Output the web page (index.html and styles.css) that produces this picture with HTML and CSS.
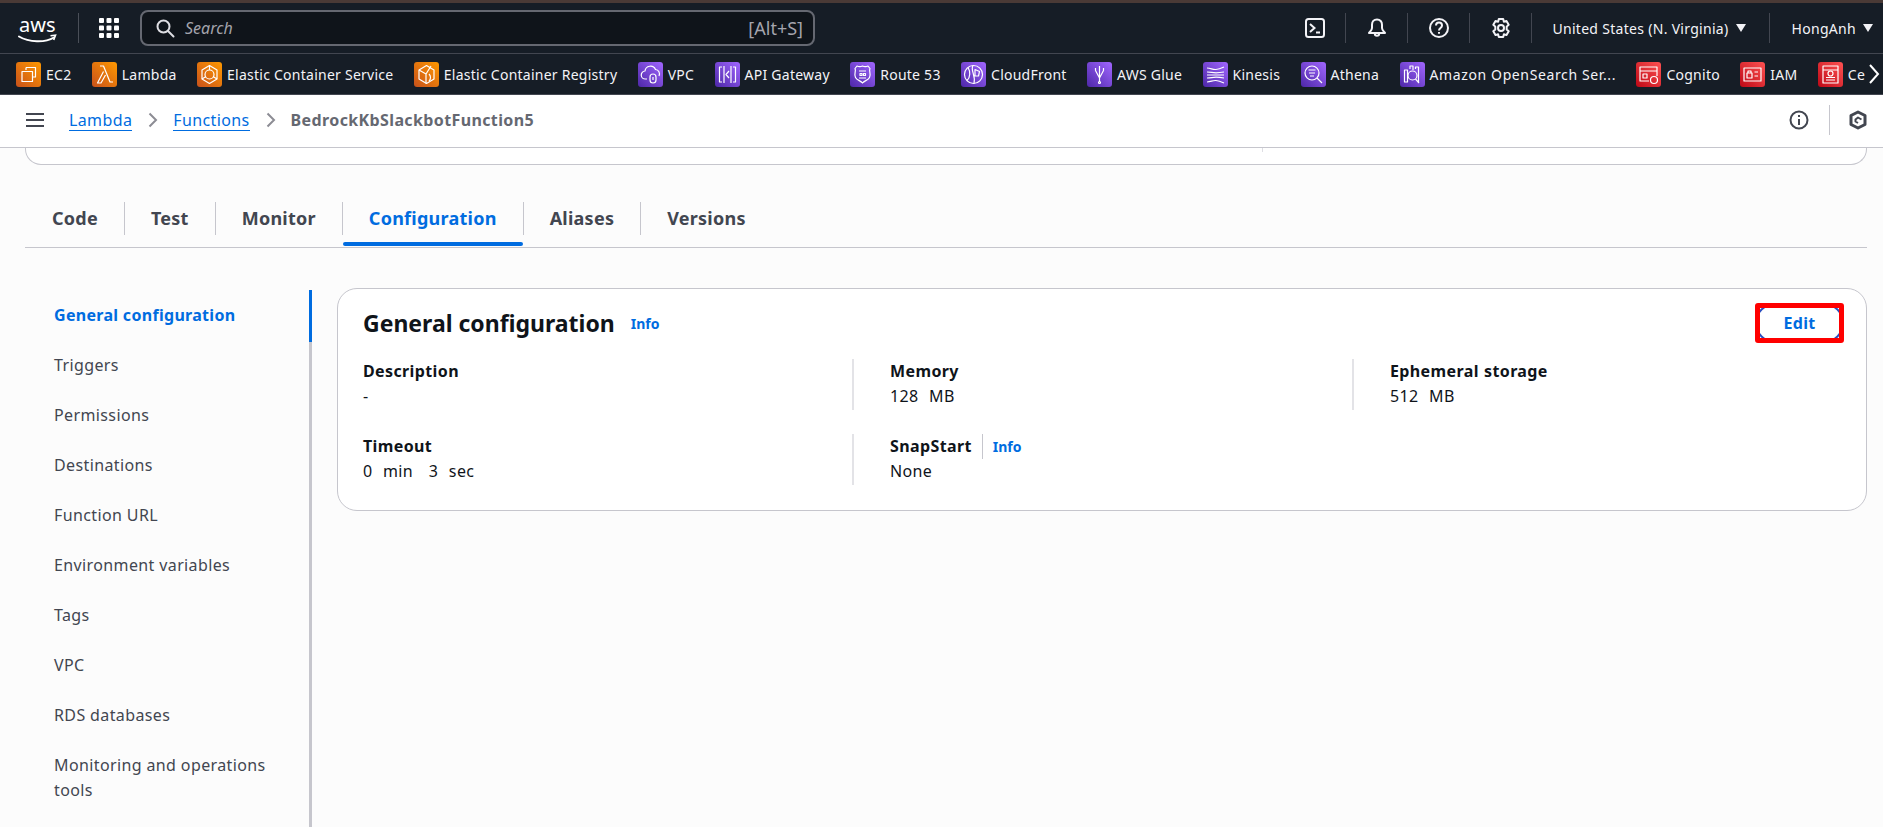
FILE: index.html
```html
<!DOCTYPE html>
<html lang="en">
<head>
    <meta charset="UTF-8">
    <title>Lambda - General configuration</title>
    <link rel="stylesheet" href="styles.css">
</head>
<body>
<div class="strip"></div>

<header class="topnav">
    <svg class="aws-logo" viewBox="0 -6 40 32" width="40" height="32">
        <text x="1" y="14" class="aws-text">aws</text>
        <path d="M1 18.500c10 6 26 6.500 35 1" fill="none" stroke="#fff" stroke-width="2" stroke-linecap="round"/>
        <path d="M32.500 17.800l5-.6-1.800 4.800" fill="none" stroke="#fff" stroke-width="1.600"/>
    </svg>
    <span class="nav-sep-logo"></span>
    <svg class="apps" viewBox="0 0 20 20" width="20" height="20" fill="#fff">
        <rect x="0" y="0" width="5" height="5" rx="1"/><rect x="7.500" y="0" width="5" height="5" rx="1"/><rect x="15" y="0" width="5" height="5" rx="1"/>
        <rect x="0" y="7.500" width="5" height="5" rx="1"/><rect x="7.500" y="7.500" width="5" height="5" rx="1"/><rect x="15" y="7.500" width="5" height="5" rx="1"/>
        <rect x="0" y="15" width="5" height="5" rx="1"/><rect x="7.500" y="15" width="5" height="5" rx="1"/><rect x="15" y="15" width="5" height="5" rx="1"/>
    </svg>
    <div class="search">
        <svg viewBox="0 0 20 20" width="20" height="20" fill="none" stroke="#dedee3" stroke-width="2"><circle cx="8.500" cy="8.500" r="6"/><path d="M13 13l5.500 5.500" stroke-linecap="round"/></svg>
        <span class="search-text">Search</span>
        <span class="search-key">[Alt+S]</span>
    </div>
    <div class="nav-right">
        <span class="nav-icon">
            <svg viewBox="0 0 20 20" width="20" height="20" fill="none" stroke="#f3f3f7" stroke-width="2"><rect x="1" y="1" width="18" height="18" rx="2.500"/><path d="M5 6l4.500 4L5 14M11 14.500h4"/></svg>
        </span>
        <span class="nav-icon">
            <svg viewBox="0 0 20 20" width="20" height="20" fill="none" stroke="#f3f3f7" stroke-width="2" stroke-linejoin="round"><path d="M10 1.500c-3.200 0-5 2.300-5 5.200v3.300c0 2-1.500 3.200-3 5h16c-1.500-1.800-3-3-3-5V6.700c0-2.900-1.800-5.200-5-5.200z"/><path d="M7.800 15.500c0 3 4.400 3 4.400 0"/></svg>
        </span>
        <span class="nav-icon">
            <svg viewBox="0 0 20 20" width="20" height="20" fill="none" stroke="#f3f3f7" stroke-width="2"><circle cx="10" cy="10" r="9"/><path d="M7 7.500c0-4 6-4 6 0 0 2.500-3 2.500-3 5"/><path d="M10 14v1.800"/></svg>
        </span>
        <span class="nav-icon">
            <svg viewBox="0 0 20 20" width="20" height="20" fill="none" stroke="#f3f3f7" stroke-width="2" stroke-linejoin="round"><path d="M7.800 1h4.400l.7 2.700 2.600-.8 2.200 3.800-2 1.900v2.800l2 1.900-2.200 3.800-2.600-.8-.7 2.700H7.800l-.7-2.700-2.600.8-2.200-3.800 2-1.900V8.600l-2-1.900 2.200-3.800 2.600.8z"/><circle cx="10" cy="10" r="3"/></svg>
        </span>
        <span class="nav-menu nav-region">United States (N. Virginia)<i class="caret"></i></span>
        <span class="nav-menu nav-user">HongAnh<i class="caret"></i></span>
    </div>
</header>

<nav class="favbar">
    <div class="favs">
        <a class="fav"><span class="ficon orange"><svg viewBox="0 0 25 25"><path d="M10 5.500h9.500V15H17M10 5.500V8M6 9.500h10.500V19.500H6z"/></svg></span>EC2</a>
        <a class="fav"><span class="ficon orange"><svg viewBox="0 0 25 25"><path d="M8 4h3.500l6.500 16h3M11.500 9.500L5.500 21h3.500l4.500-8"/></svg></span>Lambda</a>
        <a class="fav"><span class="ficon orange"><svg viewBox="0 0 25 25"><path d="M12.500 3.500l7.500 4.500v9l-7.500 4.500L5 17V8z"/><circle cx="12.500" cy="12.500" r="4.500"/><path d="M12.500 3.500V8M5 17l4-2.500M20 17l-4-2.500"/></svg></span>Elastic Container Service</a>
        <a class="fav"><span class="ficon orange"><svg viewBox="0 0 25 25"><path d="M12.500 3.500l7.500 4.500v9l-7.500 4.500L5 17V8z"/><path d="M5 8l7 4 5-8M12 12v9.500M15 12c2 2 2 5 0 7"/></svg></span>Elastic Container Registry</a>
        <a class="fav"><span class="ficon purple"><svg viewBox="0 0 25 25"><path d="M9 17H7.500a4 4 0 0 1-.5-8 5.500 5.500 0 0 1 10.500-1.500A4.500 4.500 0 0 1 21 14"/><rect x="12" y="12" width="6" height="9" rx="3"/><path d="M15 15v3"/></svg></span>VPC</a>
        <a class="fav"><span class="ficon purple"><svg viewBox="0 0 25 25"><path d="M7 5H4.500v15H7M18 5h2.500v15H18M9 4v17M16 4v17M14 9l-3 3.500 3 3.500"/></svg></span>API Gateway</a>
        <a class="fav"><span class="ficon purple"><svg viewBox="0 0 25 25"><path d="M7 4c2 1 3.500 1 5.500 0 2 1 3.500 1 5.500 0l2 2.500c-1.500 3 1.500 5-.5 9-1.500 3-5 3-7 5.500-2-2.500-5.500-2.500-7-5.500-2-4 1-6-.5-9z"/><path d="M9 9h7M9 16h7M10 11.500h2v2h-2zM13.500 11.500h2v2h-2z"/></svg></span>Route 53</a>
        <a class="fav"><span class="ficon purple"><svg viewBox="0 0 25 25"><circle cx="12.500" cy="12.500" r="9"/><path d="M7 5.500c2.500 4 2.500 9.500-1 13M12 3.500c-3 5 3 9 1 18M14 7.500l4.500 2-1 4.500H14z"/></svg></span>CloudFront</a>
        <a class="fav"><span class="ficon purple"><svg viewBox="0 0 25 25"><path d="M12.500 4v16M8.500 8.500l4 7.500 4-7.500M8.500 6v2.500M16.500 6v2.500"/><circle cx="12.500" cy="20.500" r="1"/></svg></span>AWS Glue</a>
        <a class="fav"><span class="ficon purple"><svg viewBox="0 0 25 25"><path d="M4 6c6 0 6 4 17-1M4 10c6 0 6 2 17 0M4 13h17M4 16c6 0 6-2 17 0M4 20c6 0 6-4 17 1"/></svg></span>Kinesis</a>
        <a class="fav"><span class="ficon purple"><svg viewBox="0 0 25 25"><circle cx="11" cy="11" r="7"/><path d="M16 16l5 5M7.500 8h7M8 11h6M9 14h4"/></svg></span>Athena</a>
        <a class="fav fav-long"><span class="ficon purple"><svg viewBox="0 0 25 25"><path d="M4.500 20V8h3v12zM10 7V4h3v4M15.500 7V5h3v15"/><circle cx="12.500" cy="13.500" r="4.500"/><path d="M15.500 17l3.500 4"/></svg></span>Amazon OpenSearch Ser...</a>
        <a class="fav"><span class="ficon red"><svg viewBox="0 0 25 25"><path d="M13 19H4V5h17v9M4 9h17M7 12h4v4H7z"/><circle cx="18" cy="18" r="3.500"/></svg></span>Cognito</a>
        <a class="fav"><span class="ficon red"><svg viewBox="0 0 25 25"><rect x="4" y="6" width="17" height="13"/><rect x="7" y="11" width="5" height="5"/><path d="M8 11V9h3v2M14.500 10H18M14.500 14H18"/></svg></span>IAM</a>
        <a class="fav"><span class="ficon red"><svg viewBox="0 0 25 25"><path d="M5 4h15v17H5zM5 8h15M8 18h9M8 15.500h9"/><circle cx="12.500" cy="11.500" r="2.500"/></svg></span>Ce</a>
    </div>
    <svg class="fav-next" viewBox="0 0 12 22" width="12" height="22" fill="none" stroke="#fff" stroke-width="2"><path d="M2 2l8 9-8 9"/></svg>
</nav>

<div class="crumbbar">
    <svg class="burger" viewBox="0 0 18 14" width="18" height="14" fill="none" stroke="#424650" stroke-width="2"><path d="M0 1h18M0 7h18M0 13h18"/></svg>
    <a class="crumb">Lambda</a>
    <svg class="crumb-arrow" viewBox="0 0 10 16" width="10" height="16" fill="none" stroke="#8c8c94" stroke-width="2"><path d="M1.500 1.500L8 8l-6.500 6.500"/></svg>
    <a class="crumb">Functions</a>
    <svg class="crumb-arrow" viewBox="0 0 10 16" width="10" height="16" fill="none" stroke="#8c8c94" stroke-width="2"><path d="M1.500 1.500L8 8l-6.500 6.500"/></svg>
    <span class="crumb-current">BedrockKbSlackbotFunction5</span>
    <div class="crumb-tools">
        <svg viewBox="0 0 20 20" width="20" height="20" fill="none" stroke="#424650" stroke-width="2"><circle cx="10" cy="10" r="8.500"/><path d="M10 9v6M10 5v2"/></svg>
        <span class="crumb-sep"></span>
        <svg viewBox="0 0 20 20" width="20" height="20" fill="none" stroke="#424650" stroke-width="3" stroke-linejoin="round"><path d="M10 2l7 3.500v9L10 18l-7-3.500v-9z"/><path d="M13.500 9.500L10 7.500 7.500 9.500v2l2.500 1.500" stroke-width="2"/></svg>
    </div>
</div>

<main class="page">
    <div class="summary-card">
        <span class="summary-col"></span>
        <span class="summary-col summary-last"></span>
    </div>

    <ul class="tabs">
        <li class="tab">Code</li>
        <li class="tab">Test</li>
        <li class="tab">Monitor</li>
        <li class="tab active">Configuration</li>
        <li class="tab">Aliases</li>
        <li class="tab last">Versions</li>
    </ul>

    <div class="config">
        <ul class="sidenav">
            <li class="active">General configuration</li>
            <li>Triggers</li>
            <li>Permissions</li>
            <li>Destinations</li>
            <li>Function URL</li>
            <li>Environment variables</li>
            <li>Tags</li>
            <li>VPC</li>
            <li>RDS databases</li>
            <li>Monitoring and operations tools</li>
        </ul>

        <section class="card">
            <div class="card-head">
                <h2>General configuration</h2>
                <a class="info">Info</a>
                <div class="edit-wrap">
                    <button class="edit">Edit</button>
                    <span class="redbox"></span>
                </div>
            </div>
            <div class="fields">
                <div class="field">
                    <b>Description</b>
                    <span>-</span>
                </div>
                <div class="field sep">
                    <b>Memory</b>
                    <span>128&nbsp; MB</span>
                </div>
                <div class="field sep">
                    <b>Ephemeral storage</b>
                    <span>512&nbsp; MB</span>
                </div>
                <div class="field">
                    <b>Timeout</b>
                    <span>0&nbsp; min&nbsp;&nbsp; 3&nbsp; sec</span>
                </div>
                <div class="field sep">
                    <div class="field-label">
                        <b>SnapStart</b>
                        <a class="info">Info</a>
                    </div>
                    <span>None</span>
                </div>
            </div>
        </section>
    </div>
</main>
</body>
</html>
```

FILE: styles.css
```css
* {
    margin: 0;
    padding: 0;
    box-sizing: border-box;
}
html, body {
    height: 100%;
    overflow: hidden;
}
body {
    display: flex;
    flex-direction: column;
    font-family: "Noto Sans", "Open Sans", sans-serif;
    font-size: 16px;
    letter-spacing: .38px;
    color: #0f141a;
    background: #fcfcfc;
}
ul {
    list-style: none;
}

/* top bar */
.strip {
    height: 3px;
    flex: none;
    background: #4a3a36;
}
.topnav {
    height: 50px;
    flex: none;
    background: #161d26;
    display: flex;
    align-items: center;
    padding-left: 18px;
    color: #fff;
}
.aws-logo {
    flex: none;
}
.aws-text {
    font-size: 20px;
    letter-spacing: 0;
    fill: #fff;
}
.nav-sep-logo {
    width: 1px;
    height: 30px;
    background: #4a4f58;
    margin-left: 20px;
}
.apps {
    margin-left: 20px;
    flex: none;
}
.search {
    width: 675px;
    height: 36px;
    margin-left: 21px;
    border: 2px solid #656871;
    border-radius: 8px;
    background: #0f141a;
    display: flex;
    align-items: center;
    padding: 0 10px 0 13px;
    gap: 10px;
    letter-spacing: 0;
}
.search-text {
    font-style: italic;
    color: #a4a4ad;
    flex: 1;
}
.search-key {
    color: #a4a4ad;
    font-size: 18px;
}
.nav-right {
    margin-left: auto;
    display: flex;
    align-items: center;
    height: 100%;
    font-size: 14px;
    letter-spacing: .3px;
}
.nav-icon {
    width: 62px;
    height: 30px;
    border-right: 1px solid #424650;
    display: flex;
    align-items: center;
    justify-content: center;
}
.nav-menu {
    display: flex;
    align-items: center;
    height: 30px;
    color: #f3f3f7;
}
.nav-region {
    padding: 0 23px 0 20px;
    border-right: 1px solid #424650;
}
.nav-user {
    padding: 0 10px 0 22px;
}
.caret {
    width: 0;
    height: 0;
    border-left: 5.5px solid transparent;
    border-right: 5.5px solid transparent;
    border-top: 8px solid #f3f3f7;
    margin-left: 7px;
}

/* favorites */
.favbar {
    height: 42px;
    flex: none;
    background: #161d26;
    border-top: 1px solid #424650;
    border-bottom: 1px solid #424650;
    display: flex;
    align-items: center;
    color: #f3f3f7;
    font-size: 14px;
    letter-spacing: .25px;
    padding: 0 3px 0 16px;
}
.favs {
    flex: 1;
    display: flex;
    gap: 20.4px;
    overflow: hidden;
    margin-right: 2px;
}
.fav {
    display: flex;
    align-items: center;
    gap: 5px;
    flex: none;
    white-space: nowrap;
}
.fav-long {
    letter-spacing: .62px;
}
.ficon {
    width: 25px;
    height: 25px;
    border-radius: 3px;
    flex: none;
}
.ficon svg {
    display: block;
    width: 25px;
    height: 25px;
    fill: none;
    stroke: #fff;
    stroke-width: 1.2;
    stroke-linejoin: round;
}
.orange {
    background: linear-gradient(45deg, #c8511b, #ff9900);
}
.purple {
    background: linear-gradient(45deg, #4d27a8, #a166ff);
}
.red {
    background: linear-gradient(45deg, #bd0816, #ff5252);
}
.fav-next {
    flex: none;
}

/* breadcrumbs */
.crumbbar {
    height: 53px;
    flex: none;
    background: #fff;
    border-bottom: 1px solid #c6c6cd;
    display: flex;
    align-items: center;
    padding: 0 15px 2px 26px;
}
.burger {
    margin-right: 25px;
}
.crumb {
    color: #006ce0;
    border-bottom: 1px solid #006ce0;
    line-height: 20px;
}
.crumb-arrow {
    margin: 0 15px 0 16px;
}
.crumb-current {
    color: #656871;
    font-weight: 700;
}
.crumb-tools {
    margin-left: auto;
    display: flex;
    align-items: center;
}
.crumb-sep {
    width: 1px;
    height: 30px;
    background: #c6c6cd;
    margin: 0 18px 0 20px;
}

/* page */
.page {
    flex: 1;
    padding: 0 16px 0 25px;
    min-height: 0;
}
.summary-card {
    height: 17px;
    background: #fff;
    border: 1px solid #c6c6cd;
    border-top: 0;
    border-radius: 0 0 16px 16px;
    display: flex;
}
.summary-col {
    width: 1237px;
    height: 4px;
    border-right: 1px solid #dedee3;
}
.summary-last {
    flex: 1;
    border-right: 0;
}
.tabs {
    display: flex;
    height: 46px;
    margin-top: 37px;
    border-bottom: 1px solid #c6c6cd;
    font-size: 18px;
    font-weight: 700;
    letter-spacing: .25px;
    color: #424650;
}
.tab {
    height: 33px;
    padding: 0 26px;
    border-right: 1px solid #c6c6cd;
    line-height: 33px;
    position: relative;
}
.tab:first-child {
    padding-left: 27px;
}
.tab.last {
    border-right: 0;
}
.tab.active {
    color: #006ce0;
}
.tab.active::after {
    content: "";
    position: absolute;
    left: 0;
    right: 0;
    bottom: -11px;
    height: 4px;
    background: #006ce0;
    border-radius: 4px;
}
.config {
    display: flex;
    margin-top: 40px;
    align-items: flex-start;
}
.sidenav {
    width: 287px;
    flex: none;
    height: 538px;
    margin-top: 2px;
    border-right: 3px solid #c6c6cd;
    padding: 0 20px 0 29px;
    line-height: 25px;
    color: #424650;
    position: relative;
}
.sidenav li {
    padding: 13px 0 12px;
}
.sidenav li.active {
    color: #006ce0;
    font-weight: 700;
    letter-spacing: .3px;
}
.sidenav li.active::after {
    content: "";
    position: absolute;
    top: 0;
    right: -3px;
    width: 3px;
    height: 52px;
    background: #006ce0;
}

/* card */
.card {
    flex: 1;
    margin-left: 25px;
    height: 223px;
    background: #fff;
    border: 1px solid #c6c6cd;
    border-radius: 20px;
    padding: 14px 25px 0;
}
.card-head {
    display: flex;
    align-items: center;
    height: 40px;
}
.card-head h2 {
    font-size: 23px;
    font-weight: 700;
    letter-spacing: 0;
}
.info {
    color: #006ce0;
    font-size: 14px;
    font-weight: 700;
    letter-spacing: 0;
    margin-left: 16px;
}
.edit-wrap {
    margin-left: auto;
    margin-right: -3px;
    position: relative;
    width: 89px;
    height: 40px;
}
.edit {
    width: 100%;
    height: 100%;
    background: #fff;
    border: 2px solid #2a4fc0;
    border-radius: 20px;
    color: #006ce0;
    font: 700 16px "Noto Sans", sans-serif;
    letter-spacing: .3px;
}
.redbox {
    position: absolute;
    inset: 0;
    border: 5px solid #ff0000;
    border-radius: 3px;
}
.fields {
    display: grid;
    grid-template-columns: 489px 500px 1fr;
    grid-auto-rows: 51px;
    row-gap: 24px;
    margin-top: 16px;
}
.field {
    display: flex;
    flex-direction: column;
    line-height: 25px;
    word-spacing: .7px;
}
.field.sep {
    border-left: 2px solid #e3e3e7;
    padding-left: 36px;
}
.field-label {
    display: flex;
    align-items: center;
}
.field-label b {
    padding-right: 10px;
    border-right: 1px solid #c6c6cd;
}
.field-label .info {
    margin-left: 10px;
}
```
